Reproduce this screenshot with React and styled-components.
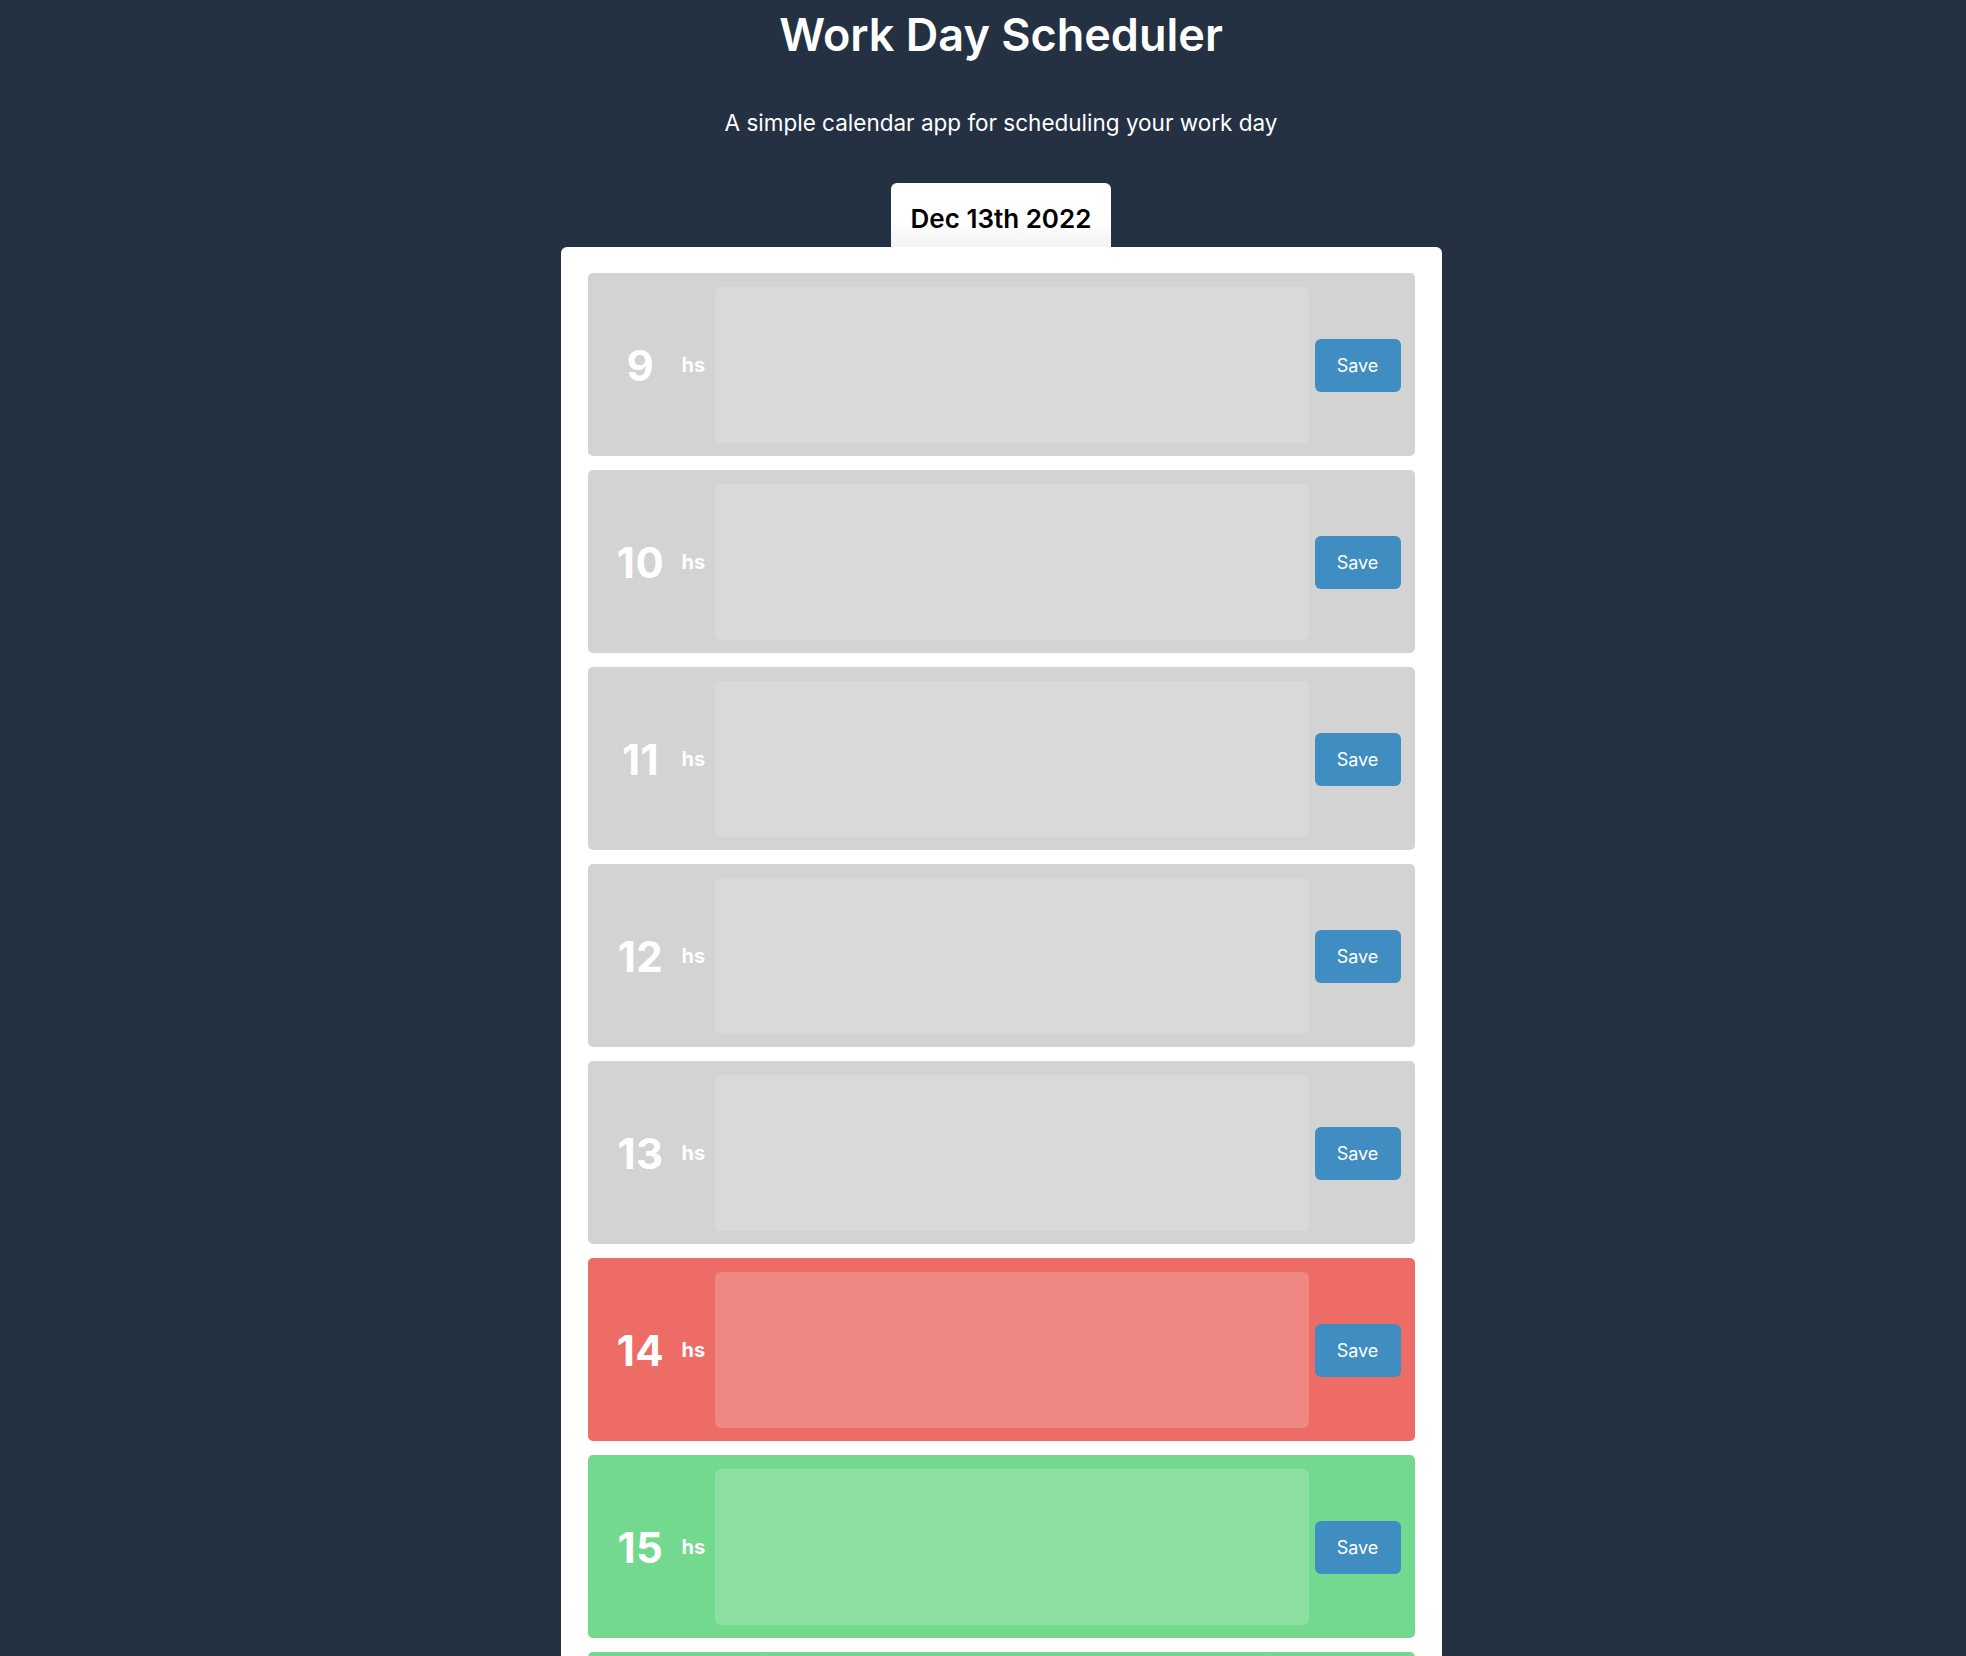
import React from 'react';
import styled, { createGlobalStyle } from 'styled-components';

const GlobalStyle = createGlobalStyle`
  body {
    margin: 0;
    background: #243142;
    font-family: Inter, "Open Sans", sans-serif;
  }
`;

const Page = styled.div`
  display: flex;
  flex-direction: column;
  align-items: center;
  padding-left: 36px;
`;

const Title = styled.h1`
  margin: 9px 0 0;
  font-size: 45px;
  line-height: 52px;
  font-weight: 600;
  color: #fff;
`;

const Subtitle = styled.p`
  margin: 48px 0 0;
  font-size: 22.5px;
  line-height: 28px;
  color: #fff;
`;

const DateTab = styled.div`
  margin-top: 46px;
  width: 220px;
  height: 64px;
  box-sizing: border-box;
  padding-top: 20px;
  text-align: center;
  border-radius: 6px 6px 0 0;
  background: linear-gradient(#fff 60%, #f3f3f3);
  font-size: 26px;
  font-weight: 600;
  color: #000;
`;

const Card = styled.div`
  width: 881px;
  box-sizing: border-box;
  padding: 26px 27px;
  background: linear-gradient(#fff 74%, #f4f4f4);
  border-radius: 6px;
  display: flex;
  flex-direction: column;
  gap: 14px;
`;

const palette = {
  past: { row: '#d3d3d3', area: '#d9d9d9' },
  present: { row: '#ed6c66', area: '#ef8882' },
  future: { row: '#72d98f', area: '#8ce0a2' },
};

const Row = styled.div`
  display: flex;
  align-items: center;
  height: 183px;
  box-sizing: border-box;
  padding: 14px 14px 13px 0;
  border-radius: 5px;
  background: ${p => palette[p.$state].row};
`;

const Hour = styled.span`
  flex-shrink: 0;
  width: 78px;
  margin-left: 14px;
  text-align: center;
  font-size: 42px;
  font-weight: 700;
  letter-spacing: 0.5px;
  color: #fff;
`;

const Suffix = styled.span`
  flex-shrink: 0;
  width: 35px;
  padding-left: 2px;
  box-sizing: border-box;
  font-size: 20px;
  font-weight: 700;
  color: #fff;
`;

const Notes = styled.textarea`
  flex: 1;
  height: 156px;
  box-sizing: border-box;
  border: none;
  border-radius: 6px;
  resize: none;
  outline: none;
  padding: 10px;
  font-family: inherit;
  background: ${p => palette[p.$state].area};
`;

const SaveButton = styled.button`
  flex-shrink: 0;
  margin-left: 6px;
  width: 86px;
  height: 53px;
  border: none;
  border-radius: 6px;
  background: #3f8dc1;
  color: #fff;
  font-family: inherit;
  font-size: 18px;
  cursor: pointer;
`;

const hours = [9, 10, 11, 12, 13, 14, 15, 16, 17];
const now = 14;

export default function App() {
  return (
    <Page>
      <GlobalStyle />
      <Title>Work Day Scheduler</Title>
      <Subtitle>A simple calendar app for scheduling your work day</Subtitle>
      <DateTab>Dec 13th 2022</DateTab>
      <Card>
        {hours.map(h => {
          const state = h < now ? 'past' : h === now ? 'present' : 'future';
          return (
            <Row key={h} $state={state}>
              <Hour>{h}</Hour>
              <Suffix>hs</Suffix>
              <Notes $state={state} />
              <SaveButton>Save</SaveButton>
            </Row>
          );
        })}
      </Card>
    </Page>
  );
}
